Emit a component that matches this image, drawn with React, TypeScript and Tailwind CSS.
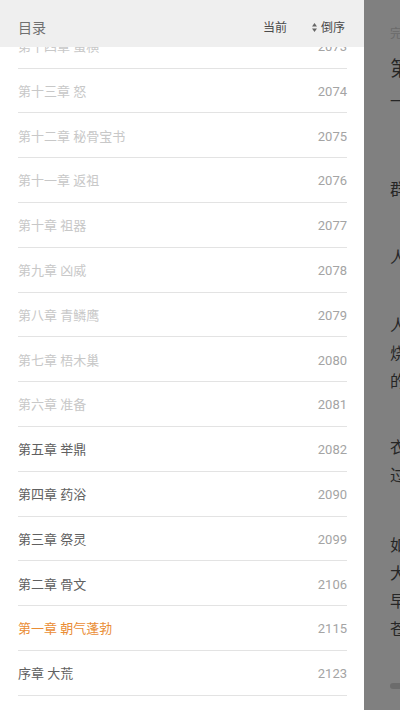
import React from "react";

type Row = { title: string; num: number; state: "read" | "unread" | "current" };

const rows: Row[] = [
  { title: "第十四章 蛮横", num: 2073, state: "read" },
  { title: "第十三章 怒", num: 2074, state: "read" },
  { title: "第十二章 秘骨宝书", num: 2075, state: "read" },
  { title: "第十一章 返祖", num: 2076, state: "read" },
  { title: "第十章 祖器", num: 2077, state: "read" },
  { title: "第九章 凶威", num: 2078, state: "read" },
  { title: "第八章 青鳞鹰", num: 2079, state: "read" },
  { title: "第七章 梧木巢", num: 2080, state: "read" },
  { title: "第六章 准备", num: 2081, state: "read" },
  { title: "第五章 举鼎", num: 2082, state: "unread" },
  { title: "第四章 药浴", num: 2090, state: "unread" },
  { title: "第三章 祭灵", num: 2099, state: "unread" },
  { title: "第二章 骨文", num: 2106, state: "unread" },
  { title: "第一章 朝气蓬勃", num: 2115, state: "current" },
  { title: "序章 大荒", num: 2123, state: "unread" },
];

const font = { fontFamily: "Roboto, 'Noto Sans CJK SC', sans-serif" };

export default function App() {
  return (
    <div className="w-[400px] h-[710px] flex overflow-hidden bg-[#808080]" style={font}>
      <div className="w-[364px] h-full bg-white flex flex-col overflow-hidden shrink-0">
        <div className="relative z-10 h-[47px] bg-[#efefef] flex items-center pt-[8px] pl-[18px] pr-[19px] shrink-0">
          <span className="text-[14px] text-[#707070] flex-1 leading-none">目录</span>
          <span className="text-[12px] text-[#4a4a4a] leading-none">当前</span>
          <span className="ml-[25px] flex items-center text-[12px] text-[#4a4a4a] leading-none">
            <svg width="5" height="9" viewBox="0 0 5 9" className="mr-[4px]">
              <polygon points="2.5,0 5,3.5 0,3.5" fill="#666" />
              <polygon points="0,5.5 5,5.5 2.5,9" fill="#666" />
            </svg>
            倒序
          </span>
        </div>
        <div className="-mt-[23.2px] flex flex-col">
          {rows.map((r) => (
            <div
              key={r.num}
              className="mr-[17px] ml-[18px] h-[44.8px] border-b border-[#e3e3e3] flex items-center justify-between shrink-0 pt-[2px]"
            >
              <span
                className={
                  "text-[13px] " +
                  (r.state === "read"
                    ? "text-[#c8c8c8]"
                    : r.state === "current"
                    ? "text-[#ea8d35]"
                    : "text-[#606060]")
                }
              >
                {r.title}
              </span>
              <span className="text-[13px] text-[#a4a4a4]">{r.num}</span>
            </div>
          ))}
        </div>
      </div>
      <div className="flex-1 overflow-hidden pl-[26px] text-[#262626] whitespace-nowrap">
        <div className="pt-[26px] text-[12px] leading-[16px] text-[#6a6a6a]">完美世界</div>
        <div className="mt-[14px] text-[20px] leading-[26px]">第一章 朝气蓬勃</div>
        <div className="mt-[7px] text-[16px] leading-[26px]">一</div>
        <div className="mt-[61px] text-[16px] leading-[28px]">群山莽莽，古木参天。</div>
        <div className="mt-[40px] text-[16px] leading-[28px]">人在山中，如在画中。</div>
        <div className="mt-[40px] text-[16px] leading-[28px]">
          <div>人族的村落外，篝火正旺，</div>
          <div>烧得噼啪作响，映红了</div>
          <div>的脸庞。</div>
        </div>
        <div className="mt-[38px] text-[16px] leading-[28px]">
          <div>衣衫褴褛的孩童</div>
          <div>过来了。</div>
        </div>
        <div className="mt-[42px] text-[16px] leading-[28px]">
          <div>如今正是清晨，</div>
          <div>大地苏醒，</div>
          <div>早有人起来，</div>
          <div>苍莽山脉。</div>
        </div>
        <div className="mt-[39px] w-[12px] h-[6px] rounded-full bg-[#6c6c6c]"></div>
      </div>
    </div>
  );
}
